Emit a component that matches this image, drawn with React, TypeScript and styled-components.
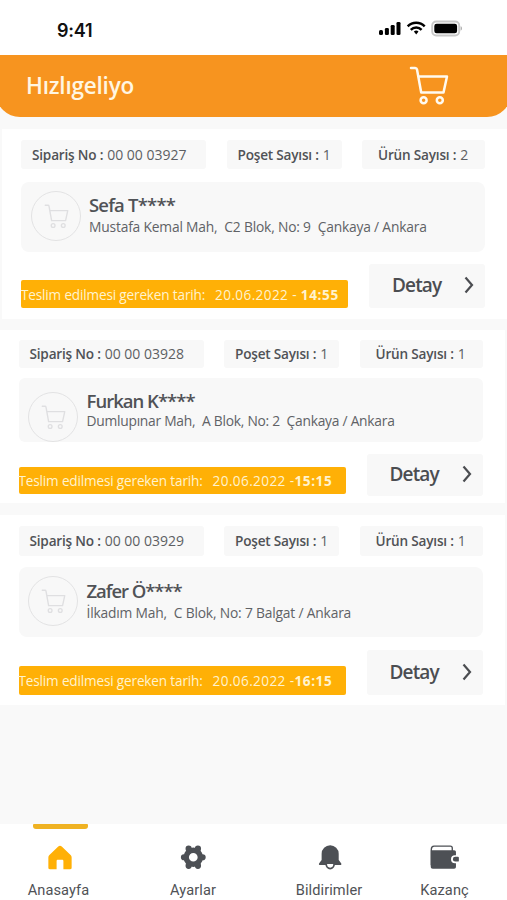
import React from "react";
import styled, { createGlobalStyle } from "styled-components";

const GlobalStyle = createGlobalStyle`
  * { box-sizing: border-box; }
  body { margin: 0; background: #f9f9f9; }
`;

const Screen = styled.div`
  display: flex;
  flex-direction: column;
  width: 507px;
  height: 900px;
  overflow: hidden;
  background: #f9f9f9;
  color: #505256;
  font-family: "Open Sans", "Noto Sans", sans-serif;
`;

const HeaderArea = styled.div`
  flex: none;
  height: 117px;
  overflow: hidden;
`;

const StatusBar = styled.div`
  display: flex;
  align-items: center;
  justify-content: space-between;
  height: 55px;
  padding: 5px 44px 0 57px;
  background: #fff;
`;

const Clock = styled.span`
  color: #111;
  font: 600 18px/24px Inter, sans-serif;
  letter-spacing: -0.2px;
  padding-top: 1px;
`;

const StatusIcons = styled.svg`
  display: block;
  width: 84px;
  height: 18px;
  margin-bottom: 2px;
`;

const TitleBar = styled.header`
  display: flex;
  align-items: center;
  justify-content: space-between;
  height: 62px;
  margin: 0 -4px;
  padding: 0 62px 0 30px;
  background: #f7941f;
  border-radius: 0 0 24px 24px;
`;

const Brand = styled.h1`
  margin: 0;
  color: #fff6e2;
  font-size: 22.5px;
  font-weight: 600;
  line-height: 30px;
  letter-spacing: -0.2px;
`;

const HeaderCart = styled.svg`
  display: block;
  width: 40px;
  height: 40px;
  color: #fffaf0;
`;

const Orders = styled.main`
  display: flex;
  flex-direction: column;
  flex: 1;
  padding-top: 12px;
`;

const Card = styled.article<{ $height: number; $gap: number; $inset: number; $top: number }>`
  display: flex;
  flex-direction: column;
  flex: none;
  height: ${(p) => p.$height}px;
  margin: 0 ${(p) => (p.$inset === 21 ? 0 : 2)}px ${(p) => p.$gap}px ${(p) => (p.$inset === 21 ? 2 : 0)}px;
  padding: ${(p) => p.$top}px 0 0 ${(p) => (p.$inset === 21 ? 19 : 18.5)}px;
  background: #fff;
`;

const ChipRow = styled.div`
  display: grid;
  grid-template-columns: 185px 115px 123px;
  justify-content: space-between;
  width: 464px;
`;

const Chip = styled.div<{ $height: number; $pad: number }>`
  display: flex;
  align-items: center;
  height: ${(p) => p.$height}px;
  padding-left: ${(p) => p.$pad}px;
  background: #f8f8f8;
  border-radius: 3px;
  white-space: pre;
`;

const ChipLabel = styled.span`
  font-size: 13.6px;
  font-weight: 600;
  line-height: 20px;
  letter-spacing: -0.2px;
`;

const ChipValue = styled.span`
  margin-left: 4px;
  color: #5d5f63;
  font-size: 14px;
  line-height: 20px;
`;

const Customer = styled.div<{ $height: number; $offset: number; $radius: number }>`
  display: flex;
  align-items: flex-start;
  width: 464px;
  height: ${(p) => p.$height}px;
  margin-top: ${(p) => p.$offset}px;
  padding-left: 9.5px;
  background: #f8f8f8;
  border-radius: ${(p) => p.$radius}px;
`;

const Avatar = styled.div<{ $top: number }>`
  display: flex;
  flex: none;
  align-items: center;
  justify-content: center;
  width: 50px;
  height: 50px;
  margin-top: ${(p) => p.$top}px;
  border: 1px solid #e3e3e4;
  border-radius: 50%;
  color: #dfdfe1;
`;

const AvatarCart = styled.svg`
  width: 25px;
  height: 27px;
  margin-left: 1px;
`;

const CustomerText = styled.div<{ $top: number; $line: number }>`
  padding: ${(p) => p.$top}px 0 0 8.5px;
  line-height: ${(p) => p.$line}px;
  white-space: pre;
`;

const Name = styled.div<{ $spacing: number }>`
  font-size: 18.5px;
  font-weight: 600;
  letter-spacing: ${(p) => p.$spacing}px;
`;

const Address = styled.div<{ $spacing: number }>`
  color: #606266;
  font-size: 13.8px;
  letter-spacing: ${(p) => p.$spacing}px;
`;

const Actions = styled.div<{ $offset: number }>`
  display: flex;
  align-items: flex-end;
  justify-content: space-between;
  width: 464px;
  margin-top: ${(p) => p.$offset}px;
`;

const Deadline = styled.div<{ $height: number; $lift: number }>`
  display: flex;
  align-items: center;
  width: 327px;
  height: ${(p) => p.$height}px;
  margin-bottom: ${(p) => p.$lift}px;
  padding-top: 1px;
  background: #ffb006;
  border-radius: 2px;
  color: #fff3cf;
  font-size: 13.6px;
  line-height: 20px;
  letter-spacing: -0.17px;
  white-space: pre;
`;

const DeadlineDate = styled.span`
  margin-left: 10px;
  letter-spacing: 0.38px;
`;

const DeadlineTime = styled.strong`
  font-weight: 700;
  letter-spacing: 0.6px;
`;

const DetailButton = styled.button<{ $height: number }>`
  display: flex;
  align-items: center;
  justify-content: space-between;
  width: 116px;
  height: ${(p) => p.$height}px;
  padding: 0 11px 2px 23px;
  border: 0;
  border-radius: 3px;
  background: #f8f8f8;
  color: #4b4d51;
  font: 600 19px/28px "Open Sans", sans-serif;
  letter-spacing: -0.85px;
`;

const Chevron = styled.svg`
  width: 10px;
  height: 18px;
`;

const TabBar = styled.nav`
  display: flex;
  flex: none;
  height: 76px;
  background: #fff;
`;

const Tab = styled.a<{ $width: number }>`
  display: flex;
  flex-direction: column;
  align-items: center;
  width: ${(p) => p.$width}px;
  color: #505256;
  font: 400 14.6px/20px Roboto, sans-serif;
  letter-spacing: 0.1px;
`;

const TabLabel = styled.span<{ $inset?: number }>`
  padding-right: ${(p) => p.$inset ?? 0}px;
`;

const Indicator = styled.span<{ $active?: boolean }>`
  width: 55px;
  height: 5px;
  border-radius: 1px 1px 3px 3px;
  background: ${(p) => (p.$active ? "#efb223" : "transparent")};
`;

const TabIcon = styled.svg`
  display: block;
  width: 30px;
  height: 28px;
  margin: 14px 0 10px;
`;

const CartShape = ({ stroke }: { stroke: number }) => (
  <g fill="none" stroke="currentColor" strokeWidth={stroke} strokeLinecap="round" strokeLinejoin="round">
    <path d="M2 2h4.2c1 0 1.600.5 1.800 1.500L12.200 26.500h22.300L38 10.500H9.300" />
    <circle cx="14.600" cy="34.300" r="3" />
    <circle cx="30.800" cy="34.300" r="3" />
  </g>
);

interface Order {
  no: string;
  bags: number;
  items: number;
  name: string;
  nameSpacing: number;
  address: string;
  addressSpacing: number;
  date: string;
  time: string;
  inset: number;
  height: number;
  gap: number;
  top: number;
  chip: number;
  infoOffset: number;
  info: number;
  radius: number;
  avatarTop: number;
  textTop: number;
  line: number;
  actionOffset: number;
  button: number;
  strip: number;
  lift: number;
}

const orders: Order[] = [
  {
    no: "00 00 03927", bags: 1, items: 2, name: "Sefa T****", nameSpacing: -0.8,
    address: "Mustafa Kemal Mah,  C2 Blok, No: 9  Çankaya / Ankara", addressSpacing: -0.18,
    date: "20.06.2022 - ", time: "14:55", inset: 21, height: 190, gap: 11, top: 11, chip: 29,
    infoOffset: 13, info: 70, radius: 8, avatarTop: 9, textTop: 12, line: 22,
    actionOffset: 12, button: 44, strip: 28, lift: 0,
  },
  {
    no: "00 00 03928", bags: 1, items: 1, name: "Furkan K****", nameSpacing: -0.98,
    address: "Dumlupınar Mah,  A Blok, No: 2  Çankaya / Ankara", addressSpacing: -0.25,
    date: "20.06.2022 -", time: "15:15", inset: 19, height: 173, gap: 12, top: 10, chip: 28,
    infoOffset: 10, info: 64, radius: 6, avatarTop: 14, textTop: 13, line: 20,
    actionOffset: 12, button: 42, strip: 27, lift: 2,
  },
  {
    no: "00 00 03929", bags: 1, items: 1, name: "Zafer Ö****", nameSpacing: -1.05,
    address: "İlkadım Mah,  C Blok, No: 7 Balgat / Ankara", addressSpacing: -0.18,
    date: "20.06.2022 -", time: "16:15", inset: 19, height: 190, gap: 0, top: 11, chip: 30,
    infoOffset: 11, info: 70, radius: 8, avatarTop: 9, textTop: 13, line: 22,
    actionOffset: 13, button: 45, strip: 29, lift: 0,
  },
];

function OrderCard({ order: o }: { order: Order }) {
  return (
    <Card $height={o.height} $gap={o.gap} $inset={o.inset} $top={o.top}>
      <ChipRow>
        <Chip $height={o.chip} $pad={11}>
          <ChipLabel>Sipariş No :</ChipLabel>
          <ChipValue>{o.no}</ChipValue>
        </Chip>
        <Chip $height={o.chip} $pad={11}>
          <ChipLabel>Poşet Sayısı :</ChipLabel>
          <ChipValue>{o.bags}</ChipValue>
        </Chip>
        <Chip $height={o.chip} $pad={16}>
          <ChipLabel>Ürün Sayısı :</ChipLabel>
          <ChipValue>{o.items}</ChipValue>
        </Chip>
      </ChipRow>
      <Customer $height={o.info} $offset={o.infoOffset} $radius={o.radius}>
        <Avatar $top={o.avatarTop}>
          <AvatarCart viewBox="0 0 40 40"><CartShape stroke={2.2} /></AvatarCart>
        </Avatar>
        <CustomerText $top={o.textTop} $line={o.line}>
          <Name $spacing={o.nameSpacing}>{o.name}</Name>
          <Address $spacing={o.addressSpacing}>{o.address}</Address>
        </CustomerText>
      </Customer>
      <Actions $offset={o.actionOffset}>
        <Deadline $height={o.strip} $lift={o.lift}>
          <span>Teslim edilmesi gereken tarih:</span>
          <DeadlineDate>{o.date}</DeadlineDate>
          <DeadlineTime>{o.time}</DeadlineTime>
        </Deadline>
        <DetailButton $height={o.button}>
          Detay
          <Chevron viewBox="0 0 10 18">
            <path d="M1.500 1.500 8 9l-6.500 7.500" fill="none" stroke="currentColor" strokeWidth="2.200" />
          </Chevron>
        </DetailButton>
      </Actions>
    </Card>
  );
}

export default function App() {
  return (
    <>
      <GlobalStyle />
      <Screen>
        <HeaderArea>
          <StatusBar>
            <Clock>9:41</Clock>
            <StatusIcons viewBox="0 0 84 18">
              <g fill="#000">
                <rect x="0" y="10" width="4" height="5" rx="1.500" />
                <rect x="5.900" y="8" width="4" height="7" rx="1.300" />
                <rect x="11.700" y="5" width="4" height="10" rx="1.300" />
                <rect x="17.500" y="2" width="4" height="13" rx="1.300" />
                <path d="M34.900 11.600a3.300 3.300 0 0 1 4.600 0l-2.300 3z" />
              </g>
              <g fill="none" stroke="#000" strokeWidth="2.500">
                <path d="M28.700 6.300a12 12 0 0 1 17 0" />
                <path d="M31.800 9.800a7.600 7.600 0 0 1 10.800 0" />
              </g>
              <rect x="53.200" y="1.500" width="27" height="14" rx="4" fill="none" stroke="#c8c8c8" strokeWidth="1.900" />
              <rect x="55.300" y="3.800" width="22.800" height="9.400" rx="2.300" fill="#000" />
              <path d="M81.600 6.300c1.800.6 1.800 3.800 0 4.400z" fill="#aaa" />
            </StatusIcons>
          </StatusBar>
          <TitleBar>
            <Brand>Hızlıgeliyo</Brand>
            <HeaderCart viewBox="0 0 40 40"><CartShape stroke={2.5} /></HeaderCart>
          </TitleBar>
        </HeaderArea>
        <Orders>
          {orders.map((o) => <OrderCard key={o.no} order={o} />)}
        </Orders>
        <TabBar>
          <Tab $width={120}>
            <Indicator $active />
            <TabIcon viewBox="0 0 30 28">
              <path d="M3 15c0-1 .4-1.800 1.100-2.500l9.100-8.800c1.100-1 2.500-1 3.600 0l9.100 8.800c.7.700 1.100 1.500 1.100 2.500v10.500c0 1-.5 1.500-1.500 1.500H18.500v-8.300c0-1-.5-1.500-1.500-1.500h-4c-1 0-1.500.5-1.500 1.500V27H4.500C3.500 27 3 26.500 3 25.500z" fill="#ffb006" />
            </TabIcon>
            <TabLabel $inset={3}>Anasayfa</TabLabel>
          </Tab>
          <Tab $width={146}>
            <Indicator />
            <TabIcon viewBox="0 0 30 28">
              <circle cx="15.300" cy="14.700" r="7.300" fill="none" stroke="#4d5055" strokeWidth="5.600" />
              <g stroke="#4d5055" strokeWidth="6.400" strokeLinecap="round">
                <path d="M5.700 14.700h.1M24.800 14.700h.1M10.500 5.900v.1M20.100 5.900v.1M10.500 23.400v.1M20.100 23.400v.1" />
              </g>
            </TabIcon>
            <TabLabel>Ayarlar</TabLabel>
          </Tab>
          <Tab $width={126}>
            <Indicator />
            <TabIcon viewBox="0 0 30 28">
              <path d="M16.200 2.200a8.800 8.800 0 0 0-8.800 8.800v6.600l-2.500 3.200c-.7 1-.2 2 1 2h20.600c1.200 0 1.700-1 1-2l-2.500-3.200V11a8.800 8.800 0 0 0-8.800-8.800z" fill="#4d5055" />
              <path d="M12.100 21.700a4.100 4.600 0 0 0 8.200 0" fill="#fff" stroke="#4d5055" strokeWidth="1.800" />
            </TabIcon>
            <TabLabel>Bildirimler</TabLabel>
          </Tab>
          <Tab $width={105}>
            <Indicator />
            <TabIcon viewBox="0 0 30 28">
              <path d="M.9 23V6.500C.9 4.500 2 3.200 3.700 3.200H20.500c1.200 0 2 .8 2 2V9H3" fill="#fff" stroke="#4d5055" strokeWidth="1.400" />
              <path d="M.3 7.500h24c1.300 0 2 .7 2 2v3.200h-1a4.100 4.100 0 0 0 0 8.200h1V24.500c0 1.300-.7 2-2 2H2.500C1 26.500.3 25.800.3 24.500z" fill="#4d5055" />
              <path d="M25.600 14.200h2.700q1 0 1 1v3q0 1-1 1h-2.700a2.500 2.500 0 0 1 0-5z" fill="#4d5055" />
            </TabIcon>
            <TabLabel>Kazanç</TabLabel>
          </Tab>
        </TabBar>
      </Screen>
    </>
  );
}
